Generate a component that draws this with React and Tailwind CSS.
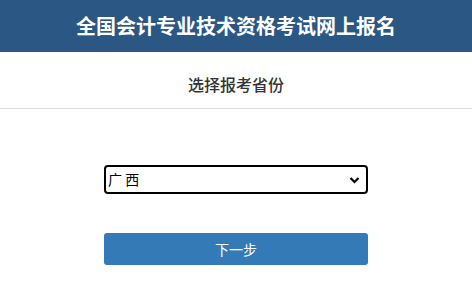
import React, { useState } from "react";

const provinces = ["北 京", "天 津", "上 海", "广 东", "广 西", "海 南"];

const Chevron = () => (
  <svg
    className="pointer-events-none absolute right-[8px] top-1/2 -translate-y-1/2"
    width="11"
    height="8"
    viewBox="0 0 11 8"
  >
    <path d="M1.5 2 L5.5 6 L9.5 2" fill="none" stroke="#000" strokeWidth="2.2" />
  </svg>
);

const App = () => {
  const [province, setProvince] = useState("广 西");

  return (
    <div
      className="min-h-screen w-full bg-white"
      style={{ fontFamily: '"Noto Sans CJK SC", "Noto Sans", sans-serif' }}
    >
      <div className="flex h-[52px] items-center justify-center bg-[#2a5783]">
        <h1 className="text-[20px] font-bold text-white">
          全国会计专业技术资格考试网上报名
        </h1>
      </div>

      <div className="border-b border-[#dddddd] pt-[20px] pb-[12px] text-center">
        <h2 className="text-[16px] font-medium leading-[24px] text-[#333333]">选择报考省份</h2>
      </div>

      <div className="flex flex-col items-center pt-[56px]">
        <div className="relative w-[264px]">
          <select
            value={province}
            onChange={(e) => setProvince(e.target.value)}
            className="h-[29px] w-full appearance-none rounded-[4px] border-2 border-black bg-white pl-[2px] text-[14px] text-black outline-none"
          >
            {provinces.map((p) => (
              <option key={p} value={p}>
                {p}
              </option>
            ))}
          </select>
          <Chevron />
        </div>

        <button className="mt-[39px] h-[32px] w-[264px] rounded-[3px] bg-[#337ab7] text-[14px] text-white">
          下一步
        </button>
      </div>
    </div>
  );
};

export default App;
